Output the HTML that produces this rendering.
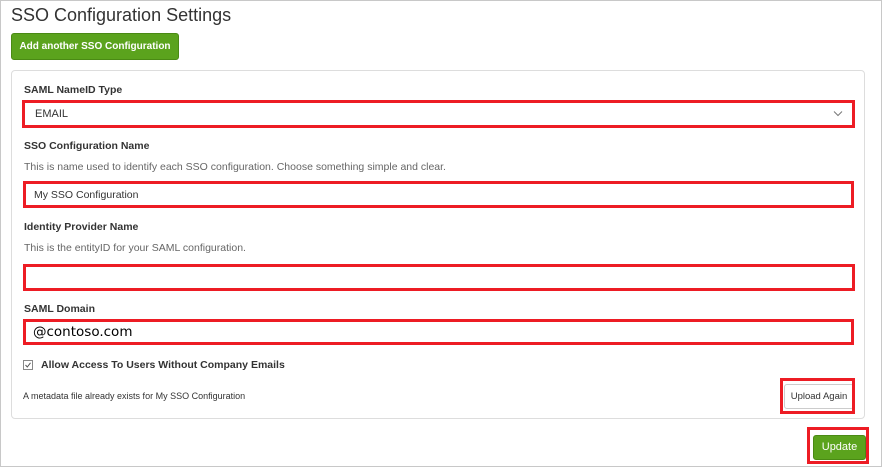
<!DOCTYPE html><html><head><style>
body{margin:0;width:882px;height:467px;overflow:hidden;background:#fff;font-family:"Liberation Sans",Arial,sans-serif;position:relative}
.frame{position:absolute;left:0;top:0;width:880px;height:465px;border:1px solid #c8c8c8}
.a{position:absolute;white-space:nowrap}
.red{position:absolute;border:3px solid #ed1c24;box-sizing:border-box}
.lbl{position:absolute;left:24px;font-size:10.5px;font-weight:bold;color:#333;white-space:nowrap}
.help{position:absolute;left:24px;font-size:10.5px;color:#666;white-space:nowrap}
.btn{position:absolute;background:#5ba31d;border:1px solid #4a8a14;border-radius:3px;color:#fff;font-size:11px;box-sizing:border-box;text-align:center;white-space:nowrap}
</style></head><body>
<div class="frame"></div>
<div class="a" style="left:11px;top:5px;font-size:18px;color:#333">SSO Configuration Settings</div>
<div class="btn" style="left:11px;top:33px;width:168px;height:27px;line-height:25px;font-weight:bold;font-size:10px">Add another SSO Configuration</div>
<div class="a" style="left:11px;top:70px;width:854px;height:349px;border:1px solid #ddd;border-radius:4px;box-sizing:border-box"></div>
<div class="lbl" style="top:84px">SAML NameID Type</div>
<div class="red" style="left:22px;top:100px;width:833px;height:28px"></div>
<div class="a" style="left:35px;top:108px;font-size:11px;color:#333">EMAIL</div>
<svg class="a" style="left:833px;top:110px" width="10" height="7"><path d="M1 1.5L5 5.5L9 1.5" stroke="#777" fill="none"/></svg>
<div class="lbl" style="top:140px">SSO Configuration Name</div>
<div class="help" style="top:161px">This is name used to identify each SSO configuration. Choose something simple and clear.</div>
<div class="red" style="left:23px;top:181px;width:831px;height:27px"></div>
<div class="a" style="left:34px;top:189px;font-size:10.5px;color:#333">My SSO Configuration</div>
<div class="lbl" style="top:221px">Identity Provider Name</div>
<div class="help" style="top:242px">This is the entityID for your SAML configuration.</div>
<div class="red" style="left:23px;top:264px;width:832px;height:27px"></div>
<div class="lbl" style="top:303px">SAML Domain</div>
<div class="red" style="left:23px;top:319px;width:831px;height:26px"></div>
<div class="a" style="left:33px;top:324px;font-size:13.5px;color:#000;font-family:'DejaVu Sans',sans-serif">@contoso.com</div>
<svg class="a" style="left:23px;top:360px" width="10" height="10"><rect x=".5" y=".5" width="9" height="9" fill="#fff" stroke="#888"/><path d="M2.5 5L4.3 7L7.5 2.8" stroke="#555" fill="none"/></svg>
<div class="lbl" style="left:41px;top:359px">Allow Access To Users Without Company Emails</div>
<div class="a" style="left:23px;top:391px;font-size:9px;color:#333">A metadata file already exists for My SSO Configuration</div>
<div class="a" style="left:784px;top:384px;width:70px;height:25px;border:1px solid #ccc;border-radius:3px;box-sizing:border-box;font-size:9.5px;text-align:center;line-height:23px;color:#333">Upload Again</div>
<div class="red" style="left:780px;top:378px;width:75px;height:36px"></div>
<div class="btn" style="left:813px;top:435px;width:53px;height:25px;line-height:23px">Update</div>
<div class="red" style="left:807px;top:427px;width:62px;height:37px"></div>
</body></html>
